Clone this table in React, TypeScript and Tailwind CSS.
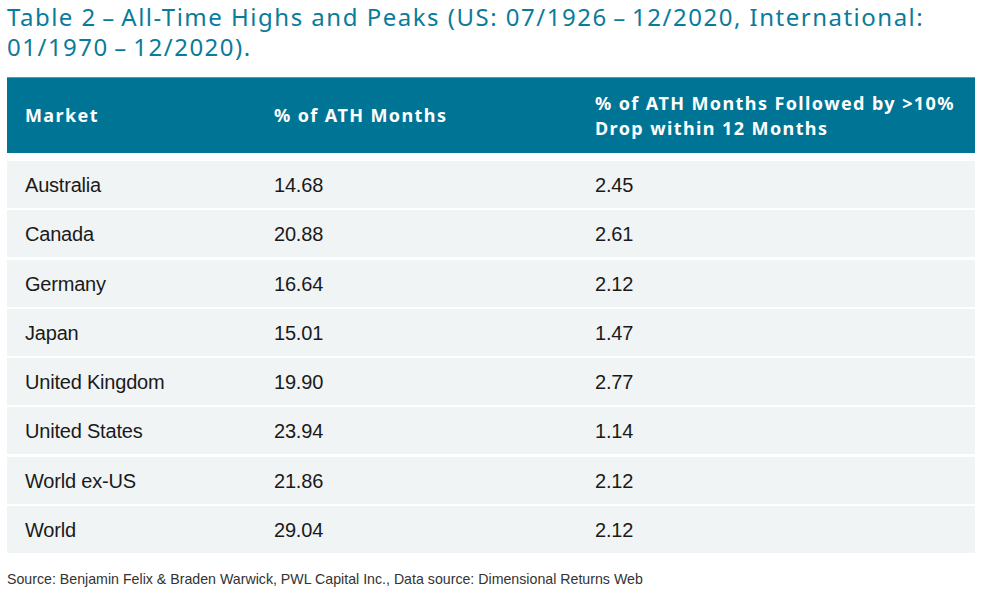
import React from 'react';

const rows = [
  { market: 'Australia', ath: '14.68', drop: '2.45' },
  { market: 'Canada', ath: '20.88', drop: '2.61' },
  { market: 'Germany', ath: '16.64', drop: '2.12' },
  { market: 'Japan', ath: '15.01', drop: '1.47' },
  { market: 'United Kingdom', ath: '19.90', drop: '2.77' },
  { market: 'United States', ath: '23.94', drop: '1.14' },
  { market: 'World ex-US', ath: '21.86', drop: '2.12' },
  { market: 'World', ath: '29.04', drop: '2.12' },
];

export default function App() {
  return (
    <div className="w-[996px] h-[607px] bg-white overflow-hidden">
      <div className="pl-[7px] pr-[21px] pt-[2px]">
        <h1 className="text-[24px] leading-[30px] text-[#0b7b9a] font-['Noto_Sans',sans-serif] tracking-[1.5px] whitespace-nowrap">
          Table 2{'\u2009'}–{'\u2009'}All-Time Highs and Peaks (US: 07/1926{'\u2009'}–{'\u2009'}12/2020, International:
          <br />
          01/1970{'\u2009'}–{'\u2009'}12/2020).
        </h1>

        <div className="mt-[15px] flex flex-col gap-[2.3px]">
          <div className="h-[76px] bg-[#007495] border-t border-[#4d9fb7] flex items-center text-white font-bold text-[18px] leading-[25px] tracking-[1.4px] font-['Noto_Sans',sans-serif]">
            <div className="w-[267px] pl-[18px]">Market</div>
            <div className="w-[321px]">% of ATH Months</div>
            <div className="flex-1 pr-4 whitespace-nowrap">
              % of ATH Months Followed by &gt;10%
              <br />
              Drop within 12 Months
            </div>
          </div>
          <div className="h-[3.4px]" />
          {rows.map((r) => (
            <div key={r.market} className="h-[47px] bg-[#f1f4f5] flex items-center pt-px text-[20px] text-[#1a1a1a] font-['Liberation_Sans',Arial,sans-serif] tracking-[-0.2px]">
              <div className="w-[267px] pl-[18px]">{r.market}</div>
              <div className="w-[321px]">{r.ath}</div>
              <div className="flex-1">{r.drop}</div>
            </div>
          ))}
        </div>

        <p className="mt-[16px] text-[14.2px] text-[#333] font-['Liberation_Sans',Arial,sans-serif]">
          Source: Benjamin Felix &amp; Braden Warwick, PWL Capital Inc., Data source: Dimensional Returns Web
        </p>
      </div>
    </div>
  );
}
